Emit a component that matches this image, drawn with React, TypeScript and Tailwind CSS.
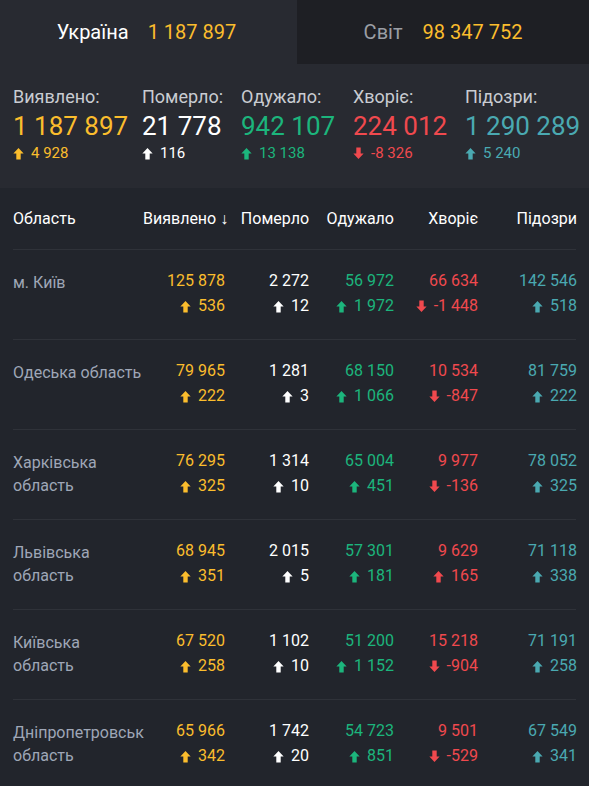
import React from "react";

type Row = {
  name: string;
  cases: [string, string];
  deaths: [string, string];
  recovered: [string, string];
  sick: [string, string, boolean];
  suspect: [string, string];
};

const rows: Row[] = [
  { name: "м. Київ", cases: ["125 878", "536"], deaths: ["2 272", "12"], recovered: ["56 972", "1 972"], sick: ["66 634", "-1 448", false], suspect: ["142 546", "518"] },
  { name: "Одеська область", cases: ["79 965", "222"], deaths: ["1 281", "3"], recovered: ["68 150", "1 066"], sick: ["10 534", "-847", false], suspect: ["81 759", "222"] },
  { name: "Харківська\nобласть", cases: ["76 295", "325"], deaths: ["1 314", "10"], recovered: ["65 004", "451"], sick: ["9 977", "-136", false], suspect: ["78 052", "325"] },
  { name: "Львівська\nобласть", cases: ["68 945", "351"], deaths: ["2 015", "5"], recovered: ["57 301", "181"], sick: ["9 629", "165", true], suspect: ["71 118", "338"] },
  { name: "Київська\nобласть", cases: ["67 520", "258"], deaths: ["1 102", "10"], recovered: ["51 200", "1 152"], sick: ["15 218", "-904", false], suspect: ["71 191", "258"] },
  { name: "Дніпропетровськ\nобласть", cases: ["65 966", "342"], deaths: ["1 742", "20"], recovered: ["54 723", "851"], sick: ["9 501", "-529", false], suspect: ["67 549", "341"] },
];

function Arrow({ up, className }: { up: boolean; className: string }) {
  return (
    <svg viewBox="0 0 12 13" className={`h-[13px] w-[11px] shrink-0 ${className}`} fill="currentColor" aria-hidden="true">
      {up ? (
        <path d="M6 0.5 L11.6 6.6 H8.4 V13 H3.6 V6.6 H0.4 Z" />
      ) : (
        <path d="M6 12.5 L11.6 6.4 H8.4 V0 H3.6 V6.4 H0.4 Z" />
      )}
    </svg>
  );
}

function Delta({ value, up, color }: { value: string; up: boolean; color: string }) {
  return (
    <span className={`inline-flex items-center gap-[7px] whitespace-nowrap ${color}`}>
      <Arrow up={up} className={color} />
      {value}
    </span>
  );
}

function Stat({ label, value, delta, up, color, width }: { label: string; value: string; delta: string; up: boolean; color: string; width: string }) {
  return (
    <div className={`flex shrink-0 flex-col whitespace-nowrap ${width}`}>
      <span className="text-[18px] leading-[22px] text-[#c9ccd2]">{label}</span>
      <span className={`mt-[2px] text-[26px] leading-[32px] ${color}`}>{value}</span>
      <span className="mt-[1px] text-[15px] leading-[20px]">
        <Delta value={delta} up={up} color={color} />
      </span>
    </div>
  );
}

function Cell({ top, bottom, up, color }: { top: string; bottom: string; up: boolean; color: string }) {
  return (
    <div className={`flex flex-col items-end whitespace-nowrap ${color}`}>
      <span className="leading-[20px]">{top}</span>
      <span className="mt-[5px] leading-[20px]">
        <Delta value={bottom} up={up} color={color} />
      </span>
    </div>
  );
}

const cols = "grid grid-cols-[130px_82px_84px_85px_84px_99px]";

export default function App() {
  return (
    <div className="h-[786px] w-[589px] overflow-hidden bg-[#22252c] font-['Roboto',sans-serif]">
      {/* Tabs */}
      <div className="flex h-[64px] bg-[#282a31]">
        <div className="flex w-[297px] items-center justify-center gap-[19px] pr-[4px] text-[20px]">
          <span className="text-white">Україна</span>
          <span className="text-[#fbbd2d]">1 187 897</span>
        </div>
        <div className="flex flex-1 items-center justify-center gap-[20px] bg-[#1e1f24] text-[20px]">
          <span className="text-[#9b9ea5]">Світ</span>
          <span className="text-[#fbbd2d]">98 347 752</span>
        </div>
      </div>

      {/* Summary */}
      <div className="flex h-[124px] bg-[#282a31] px-[13px] pt-[22px]">
        <Stat width="w-[129px]" label="Виявлено:" value="1 187 897" delta="4 928" up color="text-[#fbbd2d]" />
        <Stat width="w-[99px]" label="Померло:" value="21 778" delta="116" up color="text-white" />
        <Stat width="w-[112px]" label="Одужало:" value="942 107" delta="13 138" up color="text-[#1cb57c]" />
        <Stat width="w-[112px]" label="Хворіє:" value="224 012" delta="-8 326" up={false} color="text-[#f0494e]" />
        <Stat width="w-[120px]" label="Підозри:" value="1 290 289" delta="5 240" up color="text-[#4aa9b1]" />
      </div>

      {/* Table */}
      <div className="px-[13px] text-[16px]">
        <div className={`${cols} h-[62px] items-center border-b border-[#2f3239] text-[16px] text-white`}>
          <span>Область</span>
          <span className="whitespace-nowrap text-right">Виявлено ↓</span>
          <span className="text-right">Померло</span>
          <span className="text-right">Одужало</span>
          <span className="text-right">Хворіє</span>
          <span className="text-right">Підозри</span>
        </div>
        {rows.map((r) => (
          <div key={r.name} className={`${cols} h-[90px] items-start border-b border-[#2f3239] pt-[21px]`}>
            <span className="whitespace-pre-line leading-[23px] text-[#9fa7b7]">{r.name}</span>
            <Cell top={r.cases[0]} bottom={r.cases[1]} up color="text-[#fbbd2d]" />
            <Cell top={r.deaths[0]} bottom={r.deaths[1]} up color="text-white" />
            <Cell top={r.recovered[0]} bottom={r.recovered[1]} up color="text-[#1cb57c]" />
            <Cell top={r.sick[0]} bottom={r.sick[1]} up={r.sick[2]} color="text-[#f0494e]" />
            <Cell top={r.suspect[0]} bottom={r.suspect[1]} up color="text-[#4aa9b1]" />
          </div>
        ))}
      </div>
    </div>
  );
}
